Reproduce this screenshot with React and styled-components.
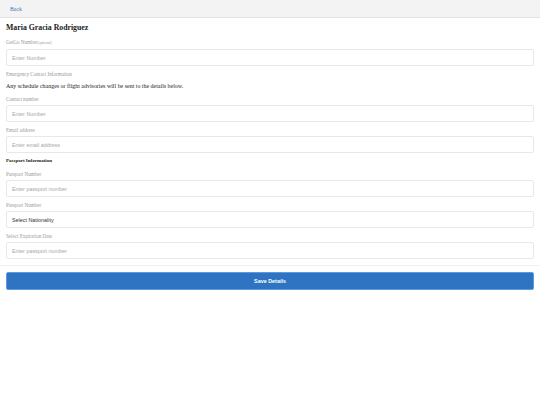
import React from 'react';
import styled, { createGlobalStyle } from 'styled-components';

const GlobalStyle = createGlobalStyle`
  html, body {
    margin: 0;
    padding: 0;
    background: #ffffff;
  }
  body {
    font-family: "Liberation Serif", "Times New Roman", serif;
    color: #222;
  }
  * {
    box-sizing: border-box;
  }
`;

const Header = styled.div`
  height: 18px;
  background: #f3f3f3;
  border-bottom: 1px solid #e2e2e2;
  display: flex;
  align-items: center;
  padding: 0 10px;
`;

const BackLink = styled.a`
  font-size: 5.8px;
  color: #3a76c2;
  text-decoration: none;
  cursor: pointer;
`;

const FormCard = styled.form`
  padding: 4px 6px 6px;
  border-bottom: 1px solid #f1f1f1;
`;

const Name = styled.h1`
  margin: 0 0 4px;
  font-size: 7.8px;
  line-height: 12px;
  font-weight: bold;
  color: #222;
`;

const Field = styled.div`
  margin-bottom: ${(p) => p.$gap ?? 4}px;
`;

const Label = styled.label`
  display: block;
  font-size: 5.1px;
  line-height: 8px;
  color: #9a9a9a;
  margin-bottom: ${(p) => p.$gap ?? 2}px;
`;

const Optional = styled.span`
  font-size: 3.6px;
`;

const Note = styled.p`
  margin: 0 0 4px;
  font-size: 5.95px;
  line-height: 10px;
  color: #222;
`;

const SectionTitle = styled.h2`
  margin: 0 0 5px;
  font-size: 5px;
  line-height: 8px;
  font-weight: bold;
  color: #222;
`;

const Input = styled.input`
  display: block;
  width: 100%;
  height: 17px;
  border: 1px solid #e8e8e8;
  border-radius: 2px;
  padding: 0 5px;
  font-family: "Liberation Sans", Arial, sans-serif;
  font-size: 5.4px;
  color: #333;
  background: #fff;
  outline: none;
  &::placeholder {
    font-family: "Liberation Sans", Arial, sans-serif;
    color: #a8a8a8;
  }
`;

const Select = styled.div`
  display: flex;
  align-items: center;
  height: 17px;
  border: 1px solid #e8e8e8;
  border-radius: 2px;
  padding: 0 5px;
  font-family: "Liberation Sans", Arial, sans-serif;
  font-size: 5.4px;
  color: #333;
`;

const Footer = styled.div`
  padding: 6px 6px 0;
`;

const SaveButton = styled.button`
  display: block;
  width: 100%;
  height: 18px;
  border: 1px solid #5c9be2;
  border-radius: 2px;
  background: #2f74c2;
  color: #fff;
  font-family: "Liberation Sans", Arial, sans-serif;
  font-size: 5.4px;
  font-weight: bold;
  cursor: pointer;
`;

function TextField({ label, placeholder, optional }) {
  return (
    <Field>
      <Label>
        {label}
        {optional && <Optional>(optional)</Optional>}
      </Label>
      <Input placeholder={placeholder} />
    </Field>
  );
}

export default function App() {
  return (
    <>
      <GlobalStyle />
      <Header>
        <BackLink>Back</BackLink>
      </Header>
      <FormCard onSubmit={(e) => e.preventDefault()}>
        <Name>Maria Gracia Rodriguez</Name>
        <TextField label="GetGo Number" placeholder="Enter Number" optional />

        <Label $gap={3}>Emergency Contact Information</Label>
        <Note>Any schedule changes or flight advisories will be sent to the details below.</Note>

        <TextField label="Contact number" placeholder="Enter Number" />
        <TextField label="Email address" placeholder="Enter email address" />

        <SectionTitle>Passport Information</SectionTitle>
        <TextField label="Passport Number" placeholder="Enter passport number" />
        <Field>
          <Label>Passport Number</Label>
          <Select>Select Nationality</Select>
        </Field>
        <Field $gap={0}>
          <Label>Select Expiration Date</Label>
          <Input placeholder="Enter passport number" />
        </Field>
      </FormCard>
      <Footer>
        <SaveButton type="button">Save Details</SaveButton>
      </Footer>
    </>
  );
}
